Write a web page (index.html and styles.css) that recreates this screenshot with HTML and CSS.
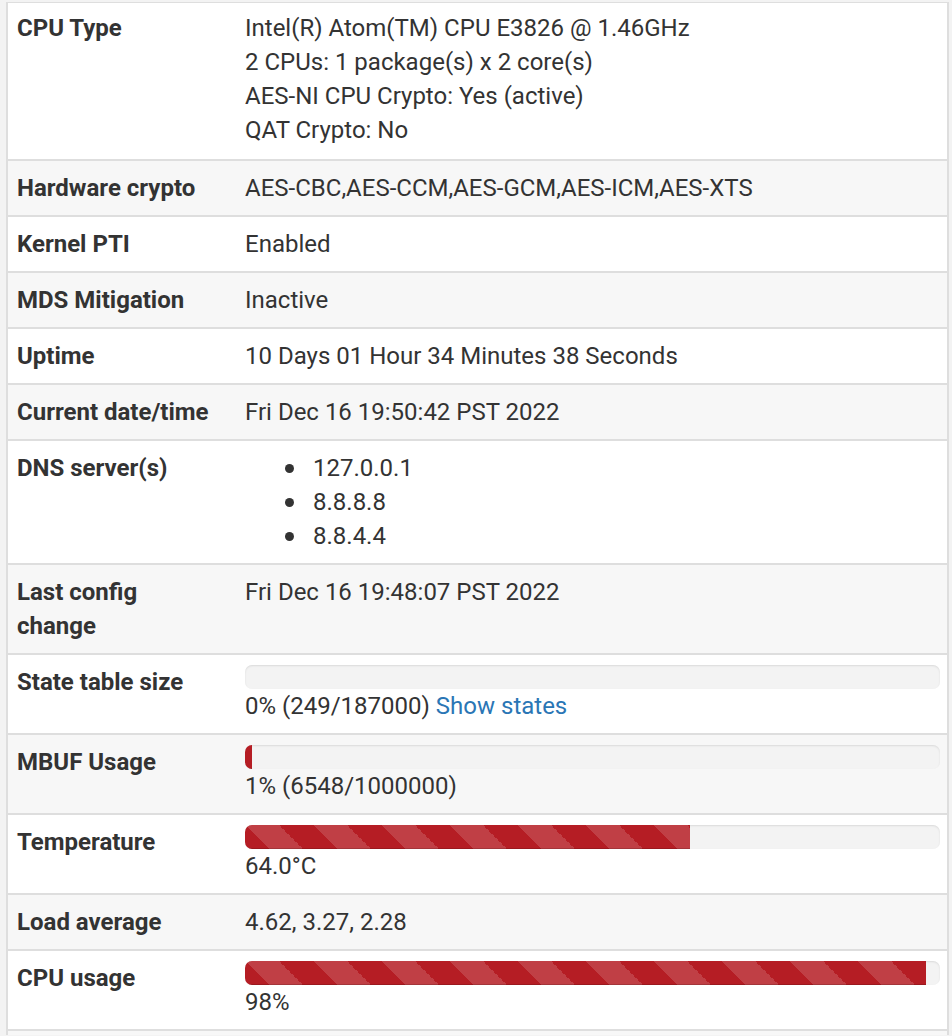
FILE: index.html
```html
<!DOCTYPE html>
<html>
<head>
<meta charset="utf-8">
<link rel="stylesheet" href="styles.css">
</head>
<body>
<div class="panel">
  <table class="info">
    <tr class="first">
      <th>CPU Type</th>
      <td>Intel(R) Atom(TM) CPU E3826 @ 1.46GHz<br>2 CPUs: 1 package(s) x 2 core(s)<br>AES-NI CPU Crypto: Yes (active)<br>QAT Crypto: No</td>
    </tr>
    <tr class="alt">
      <th>Hardware crypto</th>
      <td>AES-CBC,AES-CCM,AES-GCM,AES-ICM,AES-XTS</td>
    </tr>
    <tr>
      <th>Kernel PTI</th>
      <td>Enabled</td>
    </tr>
    <tr class="alt">
      <th>MDS Mitigation</th>
      <td>Inactive</td>
    </tr>
    <tr>
      <th>Uptime</th>
      <td>10 Days 01 Hour 34 Minutes 38 Seconds</td>
    </tr>
    <tr class="alt">
      <th>Current date/time</th>
      <td>Fri Dec 16 19:50:42 PST 2022</td>
    </tr>
    <tr>
      <th>DNS server(s)</th>
      <td>
        <ul class="dns">
          <li>127.0.0.1</li>
          <li>8.8.8.8</li>
          <li>8.8.4.4</li>
        </ul>
      </td>
    </tr>
    <tr class="alt">
      <th class="wrap">Last config change</th>
      <td>Fri Dec 16 19:48:07 PST 2022</td>
    </tr>
    <tr>
      <th>State table size</th>
      <td>
        <div class="progress"><div class="bar" style="width: 0%"></div></div>
        0% (249/187000) <a href="#" class="link">Show states</a>
      </td>
    </tr>
    <tr class="alt">
      <th>MBUF Usage</th>
      <td>
        <div class="progress"><div class="bar" style="width: 1%"></div></div>
        1% (6548/1000000)
      </td>
    </tr>
    <tr>
      <th>Temperature</th>
      <td>
        <div class="progress"><div class="bar striped" style="width: 64%"></div></div>
        64.0°C
      </td>
    </tr>
    <tr class="alt">
      <th>Load average</th>
      <td>4.62, 3.27, 2.28</td>
    </tr>
    <tr>
      <th>CPU usage</th>
      <td>
        <div class="progress"><div class="bar striped" style="width: 98%"></div></div>
        98%
      </td>
    </tr>
    <tr class="alt stub">
      <th></th>
      <td></td>
    </tr>
  </table>
</div>
</body>
</html>
```
FILE: styles.css
```css
html, body {
  margin: 0;
  padding: 0;
}
body {
  background: #f3f3f3;
  font-family: Roboto, "Liberation Sans", Arial, sans-serif;
  color: #333;
  font-size: 24px;
  line-height: 34px;
  height: 1036px;
  overflow: hidden;
}
.panel {
  margin: 2px 0 0 6px;
  width: 943px;
  box-sizing: border-box;
  border-left: 2px solid #dedede;
  border-right: 2px solid #dedede;
  background: #fff;
}
.info {
  width: 100%;
  border-collapse: collapse;
  border-spacing: 0;
}
.info th,
.info td {
  border-top: 2px solid #dedede;
  padding: 10px 7px 10px 10px;
  vertical-align: top;
  text-align: left;
}
.info th {
  width: 208px;
  font-weight: 700;
  padding-left: 9px;
  padding-right: 10px;
}
.info tr.first th,
.info tr.first td {
  border-top: 1px solid #dedede;
  padding-top: 8px;
  padding-bottom: 12px;
}
.info td {
  font-weight: 400;
}
.info tr.alt th,
.info tr.alt td {
  background: #f7f7f7;
}
.info th.wrap {
  padding-right: 70px;
  width: 148px;
}
.dns {
  margin: 0;
  padding-left: 40px;
  list-style: none;
}
.dns li::before {
  content: "";
  display: inline-block;
  width: 9px;
  height: 9px;
  border-radius: 50%;
  background: #333;
  margin-right: 19px;
  vertical-align: 3px;
}
.link {
  color: #2a76b5;
  text-decoration: none;
}
.progress {
  height: 24px;
  background: #f3f3f3;
  border-radius: 7px;
  overflow: hidden;
  box-shadow: inset 0 1px 2px rgba(0, 0, 0, 0.1);
}
.bar {
  height: 100%;
  background-color: #b51d24;
  box-shadow: inset 0 -1px 0 rgba(0, 0, 0, 0.15);
}
.bar.striped {
  background-image: linear-gradient(45deg,
    rgba(255, 255, 255, 0.15) 25%, transparent 25%,
    transparent 50%, rgba(255, 255, 255, 0.15) 50%,
    rgba(255, 255, 255, 0.15) 75%, transparent 75%, transparent);
  background-size: 68px 68px;
}
.info tr.stub th,
.info tr.stub td {
  padding: 0;
  height: 4px;
}
```
